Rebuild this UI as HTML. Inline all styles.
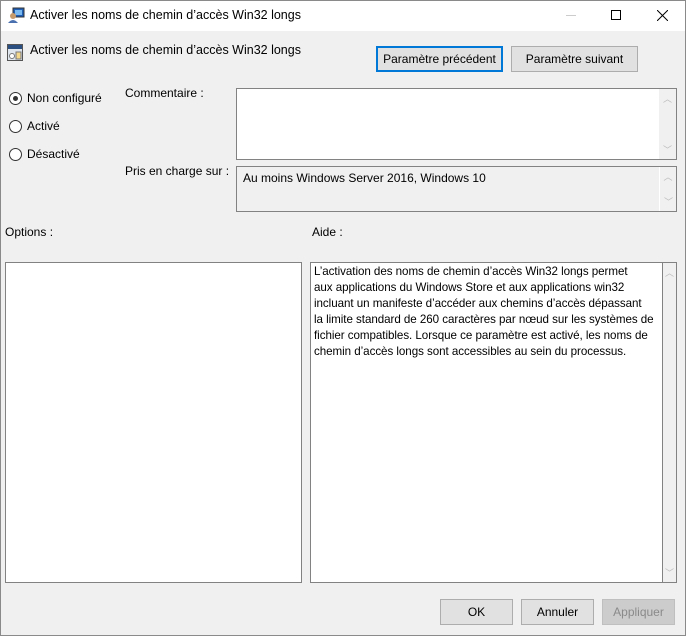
<!DOCTYPE html>
<html><head><meta charset="utf-8"><style>
*{margin:0;padding:0;box-sizing:border-box}
body{width:686px;height:636px;background:#f0f0f0;font-family:"Liberation Sans",sans-serif;font-size:12px;color:#000;position:relative;overflow:hidden}
.a{position:absolute;white-space:nowrap}
.title{left:0;top:0;width:686px;height:31px;background:#fff}
.btn{position:absolute;background:#e1e1e1;border:1px solid #adadad;text-align:center;font-size:12px}
.box{position:absolute;border:1px solid #828282;background:#fff}
.sb{position:absolute;right:0;top:0;bottom:0;width:17px;background:#f0f0f0;color:#bbb;font-size:9px;text-align:center}
.radio{position:absolute;width:13px;height:13px;border:1px solid #333;border-radius:50%;background:#fff}
</style></head><body>
<div class="a title"></div>
<div class="a" style="left:0;top:0;width:686px;height:636px;border:1px solid #8a8a8a"></div>
<svg class="a" style="left:8px;top:7px" width="18" height="17" viewBox="0 0 18 17"><rect x="5" y="1" width="11" height="9" fill="#1f5fb5" stroke="#333"/><rect x="7" y="3" width="7" height="5" fill="#7ab8f0"/><circle cx="5" cy="9" r="3" fill="#c79a6a"/><path d="M0 16 Q5 10 10 16Z" fill="#4a70b0"/></svg>
<div class="a" style="left:30px;top:8px;font-size:12.5px">Activer les noms de chemin d’accès Win32 longs</div>
<div class="a" style="left:566px;top:15px;width:10px;height:1px;background:#ccc"></div>
<div class="a" style="left:611px;top:10px;width:10px;height:10px;border:1px solid #000"></div>
<svg class="a" style="left:657px;top:10px" width="11" height="11"><path d="M0 0L11 11M11 0L0 11" stroke="#000" stroke-width="1"/></svg>
<svg class="a" style="left:7px;top:44px" width="16" height="17" viewBox="0 0 16 17"><rect x="0.5" y="0.5" width="15" height="16" fill="#dfe6ee" stroke="#555"/><rect x="1" y="1" width="14" height="4" fill="#2b4f80"/><circle cx="5" cy="12" r="2.5" fill="#fff" stroke="#777"/><rect x="9" y="8" width="5" height="7" fill="#f3d88c" stroke="#777"/></svg>
<div class="a" style="left:30px;top:43px;font-size:12.5px">Activer les noms de chemin d’accès Win32 longs</div>
<div class="btn" style="left:376px;top:46px;width:127px;height:26px;border:2px solid #0078d7;line-height:22px">Paramètre précédent</div>
<div class="btn" style="left:511px;top:46px;width:127px;height:26px;line-height:24px">Paramètre suivant</div>
<div class="radio" style="left:9px;top:92px"><div style="position:absolute;left:3px;top:3px;width:5px;height:5px;border-radius:50%;background:#333"></div></div>
<div class="a" style="left:27px;top:91px">Non configuré</div>
<div class="radio" style="left:9px;top:120px"></div>
<div class="a" style="left:27px;top:119px">Activé</div>
<div class="radio" style="left:9px;top:148px"></div>
<div class="a" style="left:27px;top:147px">Désactivé</div>
<div class="a" style="left:125px;top:86px">Commentaire :</div>
<div class="a" style="left:125px;top:164px">Pris en charge sur :</div>
<div class="box" style="left:236px;top:88px;width:441px;height:72px"><div class="sb"><div style="margin-top:3px">︿</div><div style="position:absolute;bottom:3px;width:17px">﹀</div></div></div>
<div class="box" style="left:236px;top:166px;width:441px;height:46px;background:#f0f0f0"><div class="a" style="left:6px;top:4px">Au moins Windows Server 2016, Windows 10</div><div class="sb" style="border-left:1px solid #fff"><div style="margin-top:3px">︿</div><div style="position:absolute;bottom:3px;width:17px">﹀</div></div></div>
<div class="a" style="left:5px;top:225px">Options :</div>
<div class="a" style="left:312px;top:225px">Aide :</div>
<div class="box" style="left:5px;top:262px;width:297px;height:321px"></div>
<div class="box" style="left:310px;top:262px;width:367px;height:321px"><div class="sb" style="width:14px;border-left:1px solid #828282"><div style="margin-top:3px">︿</div><div style="position:absolute;bottom:3px;width:13px">﹀</div></div>
<div class="a" style="left:3px;top:1px;font-size:11.6px;line-height:16px;letter-spacing:-0.05px">L’activation des noms de chemin d’accès Win32 longs permet<br>aux applications du Windows Store et aux applications win32<br>incluant un manifeste d’accéder aux chemins d’accès dépassant<br>la limite standard de 260 caractères par nœud sur les systèmes de<br>fichier compatibles. Lorsque ce paramètre est activé, les noms de<br>chemin d’accès longs sont accessibles au sein du processus.</div></div>
<div class="btn" style="left:440px;top:599px;width:73px;height:26px;line-height:24px">OK</div>
<div class="btn" style="left:521px;top:599px;width:73px;height:26px;line-height:24px">Annuler</div>
<div class="btn" style="left:602px;top:599px;width:73px;height:26px;line-height:24px;background:#ccc;border-color:#bfbfbf;color:#8a8a8a">Appliquer</div>
</body></html>
